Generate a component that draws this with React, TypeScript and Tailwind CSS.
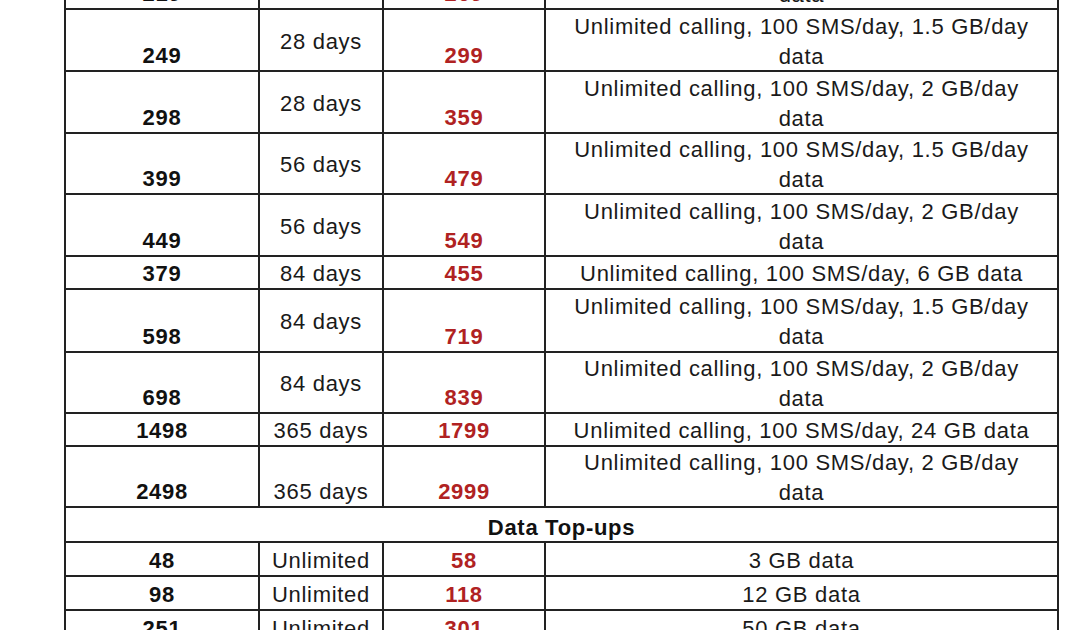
type Plan = {
  price: string
  validity: string
  newPrice: string
  benefits: string
  h: string
  tall?: boolean
  validityBottom?: boolean
}

const plans: Plan[] = [
  { price: "219", validity: "28 days", newPrice: "269", benefits: "Unlimited calling, 100 SMS/day, 1 GB/day data", h: "h-[62px]", tall: true },
  { price: "249", validity: "28 days", newPrice: "299", benefits: "Unlimited calling, 100 SMS/day, 1.5 GB/day data", h: "h-[62px]", tall: true },
  { price: "298", validity: "28 days", newPrice: "359", benefits: "Unlimited calling, 100 SMS/day, 2 GB/day data", h: "h-[62px]", tall: true },
  { price: "399", validity: "56 days", newPrice: "479", benefits: "Unlimited calling, 100 SMS/day, 1.5 GB/day data", h: "h-[61px]", tall: true },
  { price: "449", validity: "56 days", newPrice: "549", benefits: "Unlimited calling, 100 SMS/day, 2 GB/day data", h: "h-[62px]", tall: true },
  { price: "379", validity: "84 days", newPrice: "455", benefits: "Unlimited calling, 100 SMS/day, 6 GB data", h: "h-[33px]" },
  { price: "598", validity: "84 days", newPrice: "719", benefits: "Unlimited calling, 100 SMS/day, 1.5 GB/day data", h: "h-[63px]", tall: true },
  { price: "698", validity: "84 days", newPrice: "839", benefits: "Unlimited calling, 100 SMS/day, 2 GB/day data", h: "h-[61px]", tall: true },
  { price: "1498", validity: "365 days", newPrice: "1799", benefits: "Unlimited calling, 100 SMS/day, 24 GB data", h: "h-[33px]" },
  { price: "2498", validity: "365 days", newPrice: "2999", benefits: "Unlimited calling, 100 SMS/day, 2 GB/day data", h: "h-[61px]", tall: true, validityBottom: true },
]

const topups: Plan[] = [
  { price: "48", validity: "Unlimited", newPrice: "58", benefits: "3 GB data", h: "h-[34px]" },
  { price: "98", validity: "Unlimited", newPrice: "118", benefits: "12 GB data", h: "h-[34px]" },
  { price: "251", validity: "Unlimited", newPrice: "301", benefits: "50 GB data", h: "h-[34px]" },
]

const cell = "border-r-2 border-b-2 border-[#222] flex justify-center text-center px-2"

function PlanRow({ p }: { p: Plan }) {
  // tall rows: prices sit at the bottom of the cell, the rest is centred
  const edge = p.tall ? "items-end leading-[28px]" : "items-center pt-[3px] leading-[30px]"
  const mid = p.validityBottom ? "items-end leading-[28px]" : "items-center pt-[3px] leading-[30px]"
  return (
    <>
      <div className={`${cell} ${p.h} ${edge} font-bold text-[#111]`}>{p.price}</div>
      <div className={`${cell} ${p.h} ${p.tall ? mid : edge}`}>{p.validity}</div>
      <div className={`${cell} ${p.h} ${edge} font-bold text-[#b02222]`}>{p.newPrice}</div>
      <div className={`${cell} ${p.h} items-center pt-[3px] leading-[30px] px-4`}>{p.benefits}</div>
    </>
  )
}

export default function App() {
  return (
    <div className="h-[630px] w-[1079px] overflow-hidden bg-white font-['Liberation_Sans',Arial,sans-serif] text-[22px] tracking-[0.7px] text-[#1a1a1a]">
      <div className="ml-[64px] mt-[-52px] w-[995px] grid grid-cols-[194px_124px_162px_513px] border-l-2 border-[#222]">
        {plans.map((p) => (
          <PlanRow key={p.price} p={p} />
        ))}
        <div className={`${cell} col-span-4 h-[35px] items-center pt-[7px] leading-[28px] font-bold text-[#111]`}>
          Data Top-ups
        </div>
        {topups.map((p) => (
          <PlanRow key={p.price} p={p} />
        ))}
      </div>
    </div>
  )
}
